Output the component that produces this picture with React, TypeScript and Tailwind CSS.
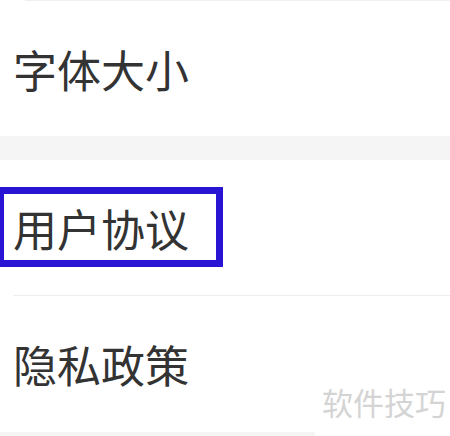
import React from "react";

const rows = ["字体大小", "用户协议", "隐私政策"];

export default function App() {
  return (
    <div
      className="relative w-[450px] h-[436px] overflow-hidden bg-white text-[#333333]"
      style={{ fontFamily: '"Noto Sans CJK SC", "Noto Sans", sans-serif' }}
    >
      <div className="ml-[25px] h-px bg-[#f0f0f0]" />
      <div className="flex h-[135px] items-center pl-[13px] text-[44px] leading-none">
        {rows[0]}
      </div>

      <div className="h-[24px] bg-[#f5f5f5]" />

      <div className="relative flex h-[135px] items-center pl-[13px] text-[44px] leading-none">
        {rows[1]}
        {/* annotation frame */}
        <div className="absolute left-[-3px] top-[27px] h-[80px] w-[226px] border-[7px] border-[#2a14d4]" />
      </div>
      <div className="ml-[13px] h-px bg-[#eeeeee]" />

      <div className="flex h-[136px] items-center pl-[13px] text-[44px] leading-none">
        {rows[2]}
      </div>
      <div className="h-[4px] bg-[#f5f5f5]" />

      {/* watermark */}
      <div className="absolute bottom-0 right-0 flex h-[56px] w-[135px] items-start justify-end bg-white pr-[4px] pt-[6px] text-[31px] leading-none text-[#d4d4d4]">
        软件技巧
      </div>
    </div>
  );
}
